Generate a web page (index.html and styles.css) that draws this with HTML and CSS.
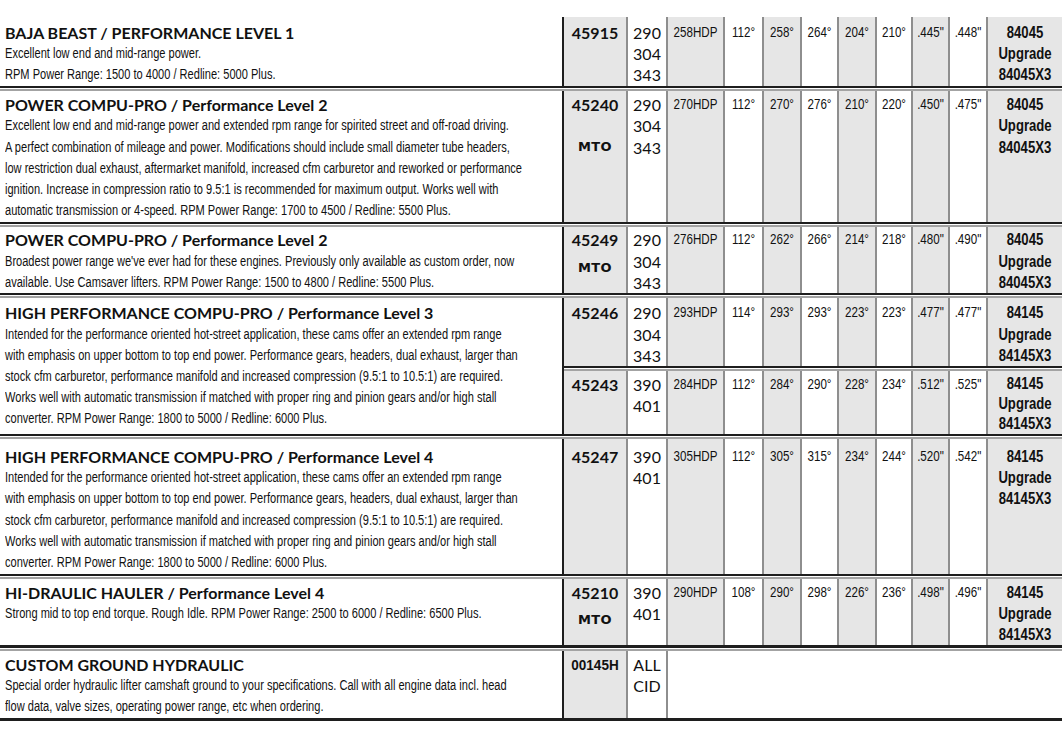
FILE: index.html
```html
<!DOCTYPE html>
<html>
<head>
<meta charset="utf-8">
<link rel="stylesheet" href="styles.css">
</head>
<body>
<div class="table">

  <div class="row r1">
    <div class="desc">
      <div class="title">BAJA BEAST / PERFORMANCE LEVEL 1</div>
      <div class="line">Excellent low end and mid-range power.</div>
      <div class="line">RPM Power Range: 1500 to 4000 / Redline: 5000 Plus.</div>
    </div>
    <div class="right">
      <div class="sub">
        <div class="c part g"><div>45915</div></div>
        <div class="c cid">290<br>304<br>343</div>
        <div class="c g"><span class="cn">258HDP</span></div>
        <div class="c"><span class="cn">112°</span></div>
        <div class="c g"><span class="cn">258°</span></div>
        <div class="c"><span class="cn">264°</span></div>
        <div class="c g"><span class="cn">204°</span></div>
        <div class="c"><span class="cn">210°</span></div>
        <div class="c g"><span class="cn">.445"</span></div>
        <div class="c"><span class="cn">.448"</span></div>
        <div class="c g"><span class="lift">84045<br>Upgrade<br>84045X3</span></div>
      </div>
    </div>
  </div>

  <div class="row r2">
    <div class="desc">
      <div class="title">POWER COMPU-PRO / Performance Level 2</div>
      <div class="line">Excellent low end and mid-range power and extended rpm range for spirited street and off-road driving.</div>
      <div class="line">A perfect combination of mileage and power. Modifications should include small diameter tube headers,</div>
      <div class="line">low restriction dual exhaust, aftermarket manifold, increased cfm carburetor and reworked or performance</div>
      <div class="line">ignition. Increase in compression ratio to 9.5:1 is recommended for maximum output. Works well with</div>
      <div class="line">automatic transmission or 4-speed. RPM Power Range: 1700 to 4500 / Redline: 5500 Plus.</div>
    </div>
    <div class="right">
      <div class="sub">
        <div class="c part g"><div>45240</div><div class="mto mto-low">MTO</div></div>
        <div class="c cid">290<br>304<br>343</div>
        <div class="c g"><span class="cn">270HDP</span></div>
        <div class="c"><span class="cn">112°</span></div>
        <div class="c g"><span class="cn">270°</span></div>
        <div class="c"><span class="cn">276°</span></div>
        <div class="c g"><span class="cn">210°</span></div>
        <div class="c"><span class="cn">220°</span></div>
        <div class="c g"><span class="cn">.450"</span></div>
        <div class="c"><span class="cn">.475"</span></div>
        <div class="c g"><span class="lift">84045<br>Upgrade<br>84045X3</span></div>
      </div>
    </div>
  </div>

  <div class="row r3">
    <div class="desc">
      <div class="title">POWER COMPU-PRO / Performance Level 2</div>
      <div class="line">Broadest power range we've ever had for these engines. Previously only available as custom order, now</div>
      <div class="line">available. Use Camsaver lifters. RPM Power Range: 1500 to 4800 / Redline: 5500 Plus.</div>
    </div>
    <div class="right">
      <div class="sub">
        <div class="c part g"><div>45249</div><div class="mto">MTO</div></div>
        <div class="c cid">290<br>304<br>343</div>
        <div class="c g"><span class="cn">276HDP</span></div>
        <div class="c"><span class="cn">112°</span></div>
        <div class="c g"><span class="cn">262°</span></div>
        <div class="c"><span class="cn">266°</span></div>
        <div class="c g"><span class="cn">214°</span></div>
        <div class="c"><span class="cn">218°</span></div>
        <div class="c g"><span class="cn">.480"</span></div>
        <div class="c"><span class="cn">.490"</span></div>
        <div class="c g"><span class="lift">84045<br>Upgrade<br>84045X3</span></div>
      </div>
    </div>
  </div>

  <div class="row r4">
    <div class="desc">
      <div class="title">HIGH PERFORMANCE COMPU-PRO / Performance Level 3</div>
      <div class="line">Intended for the performance oriented hot-street application, these cams offer an extended rpm range</div>
      <div class="line">with emphasis on upper bottom to top end power. Performance gears, headers, dual exhaust, larger than</div>
      <div class="line">stock cfm carburetor, performance manifold and increased compression (9.5:1 to 10.5:1) are required.</div>
      <div class="line">Works well with automatic transmission if matched with proper ring and pinion gears and/or high stall</div>
      <div class="line">converter. RPM Power Range: 1800 to 5000 / Redline: 6000 Plus.</div>
    </div>
    <div class="right">
      <div class="sub">
        <div class="c part g"><div>45246</div></div>
        <div class="c cid">290<br>304<br>343</div>
        <div class="c g"><span class="cn">293HDP</span></div>
        <div class="c"><span class="cn">114°</span></div>
        <div class="c g"><span class="cn">293°</span></div>
        <div class="c"><span class="cn">293°</span></div>
        <div class="c g"><span class="cn">223°</span></div>
        <div class="c"><span class="cn">223°</span></div>
        <div class="c g"><span class="cn">.477"</span></div>
        <div class="c"><span class="cn">.477"</span></div>
        <div class="c g"><span class="lift">84145<br>Upgrade<br>84145X3</span></div>
      </div>
      <div class="sub">
        <div class="c part g"><div>45243</div></div>
        <div class="c cid">390<br>401</div>
        <div class="c g"><span class="cn">284HDP</span></div>
        <div class="c"><span class="cn">112°</span></div>
        <div class="c g"><span class="cn">284°</span></div>
        <div class="c"><span class="cn">290°</span></div>
        <div class="c g"><span class="cn">228°</span></div>
        <div class="c"><span class="cn">234°</span></div>
        <div class="c g"><span class="cn">.512"</span></div>
        <div class="c"><span class="cn">.525"</span></div>
        <div class="c g"><span class="lift">84145<br>Upgrade<br>84145X3</span></div>
      </div>
    </div>
  </div>

  <div class="row r5">
    <div class="desc">
      <div class="title">HIGH PERFORMANCE COMPU-PRO / Performance Level 4</div>
      <div class="line">Intended for the performance oriented hot-street application, these cams offer an extended rpm range</div>
      <div class="line">with emphasis on upper bottom to top end power. Performance gears, headers, dual exhaust, larger than</div>
      <div class="line">stock cfm carburetor, performance manifold and increased compression (9.5:1 to 10.5:1) are required.</div>
      <div class="line">Works well with automatic transmission if matched with proper ring and pinion gears and/or high stall</div>
      <div class="line">converter. RPM Power Range: 1800 to 5000 / Redline: 6000 Plus.</div>
    </div>
    <div class="right">
      <div class="sub">
        <div class="c part g"><div>45247</div></div>
        <div class="c cid">390<br>401</div>
        <div class="c g"><span class="cn">305HDP</span></div>
        <div class="c"><span class="cn">112°</span></div>
        <div class="c g"><span class="cn">305°</span></div>
        <div class="c"><span class="cn">315°</span></div>
        <div class="c g"><span class="cn">234°</span></div>
        <div class="c"><span class="cn">244°</span></div>
        <div class="c g"><span class="cn">.520"</span></div>
        <div class="c"><span class="cn">.542"</span></div>
        <div class="c g"><span class="lift">84145<br>Upgrade<br>84145X3</span></div>
      </div>
    </div>
  </div>

  <div class="row r6 heavy">
    <div class="desc">
      <div class="title">HI-DRAULIC HAULER / Performance Level 4</div>
      <div class="line">Strong mid to top end torque. Rough Idle. RPM Power Range: 2500 to 6000 / Redline: 6500 Plus.</div>
    </div>
    <div class="right">
      <div class="sub">
        <div class="c part g"><div>45210</div><div class="mto">MTO</div></div>
        <div class="c cid">390<br>401</div>
        <div class="c g"><span class="cn">290HDP</span></div>
        <div class="c"><span class="cn">108°</span></div>
        <div class="c g"><span class="cn">290°</span></div>
        <div class="c"><span class="cn">298°</span></div>
        <div class="c g"><span class="cn">226°</span></div>
        <div class="c"><span class="cn">236°</span></div>
        <div class="c g"><span class="cn">.498"</span></div>
        <div class="c"><span class="cn">.496"</span></div>
        <div class="c g"><span class="lift">84145<br>Upgrade<br>84145X3</span></div>
      </div>
    </div>
  </div>

  <div class="row r7 heavy">
    <div class="desc">
      <div class="title">CUSTOM GROUND HYDRAULIC</div>
      <div class="line">Special order hydraulic lifter camshaft ground to your specifications. Call with all engine data incl. head</div>
      <div class="line">flow data, valve sizes, operating power range, etc when ordering.</div>
    </div>
    <div class="right">
      <div class="sub custom">
        <div class="c g"><span class="part-cn">00145H</span></div>
        <div class="c cid">ALL<br>CID</div>
        <div class="c blank"></div>
      </div>
    </div>
  </div>

</div>
</body>
</html>
```

FILE: styles.css
```css
* { box-sizing: border-box; }

body {
  margin: 0;
  padding-top: 17px;
  background: #ffffff;
  color: #111111;
  font-family: "Liberation Sans", Arial, sans-serif;
}

.table {
  width: 1062px;
}

.row {
  display: flex;
  border-bottom: 2px solid #1e1e1e;
}

.row + .row {
  margin-top: 1px;
  border-top: 2px solid #a3a3a3;
}

.row.heavy {
  border-bottom-width: 3px;
}

.desc {
  width: 564px;
  flex: none;
  border-right: 2px solid #1e1e1e;
  padding: 3px 0 1px 5px;
  line-height: 21.2px;
  white-space: nowrap;
  overflow: hidden;
}

.c {
  padding: 3px 0 1px;
  line-height: 21.2px;
  text-align: center;
  white-space: nowrap;
}

/* per-row vertical rhythm */
.r1 > .desc, .r1 .c { padding-top: 4.5px; padding-bottom: 1px; }
.r2 > .desc, .r2 .c { padding-top: 3px; padding-bottom: 1px; }
.r3 > .desc, .r3 .c { padding-top: 2px; padding-bottom: 0; }
.r4 > .desc, .r4 .c { padding-top: 4.5px; padding-bottom: 0; }
.r4 .sub + .sub .c { padding-top: 3px; padding-bottom: 0; line-height: 21px; }
.r4 .sub + .sub .lift { line-height: 20px; }
.r5 > .desc, .r5 .c { padding-top: 7px; padding-bottom: 1px; }
.r6 > .desc, .r6 .c { padding-top: 2.5px; padding-bottom: 0; }
.r7 > .desc, .r7 .c { padding-top: 2.5px; padding-bottom: 1px; }

.title {
  font-family: "Lato", "Liberation Sans", sans-serif;
  font-weight: 700;
  font-size: 16px;
}

.line {
  font-size: 14px;
  transform: scaleX(0.79);
  transform-origin: 0 0;
}

.right {
  flex: 1;
  display: flex;
  flex-direction: column;
}

.sub {
  flex: 1;
  display: grid;
  grid-template-columns: 62px 40px 57px 39px 38px 37px 38px 36px 37px 38px 1fr;
}

.sub.custom {
  grid-template-columns: 62px 40px 1fr;
}

.sub + .sub {
  margin-top: 1px;
  border-top: 2px solid #a3a3a3;
}

.sub:not(:last-child) {
  border-bottom: 2px solid #1e1e1e;
}

.c + .c {
  border-left: 2px solid #8e8e8e;
}

.g {
  background: #e6e6e6;
}

.part {
  font-family: "Lato", "Liberation Sans", sans-serif;
  font-weight: 700;
  font-size: 16px;
}

.part-cn {
  display: block;
  font-weight: 700;
  font-size: 15px;
  transform: scaleX(0.9);
}

.mto {
  font-family: "DejaVu Sans", sans-serif;
  font-weight: 700;
  font-size: 13px;
  letter-spacing: 0.3px;
  margin-top: 6px;
}

.mto.mto-low {
  margin-top: 21px;
}

.cid {
  font-family: "Lato", "Liberation Sans", sans-serif;
  font-size: 16px;
}

.cn {
  display: block;
  font-size: 14.5px;
  transform: scaleX(0.8);
}

.lift {
  display: block;
  font-size: 16px;
  font-weight: 700;
  transform: scaleX(0.82);
}

.blank {
  background: #ffffff;
}
```
